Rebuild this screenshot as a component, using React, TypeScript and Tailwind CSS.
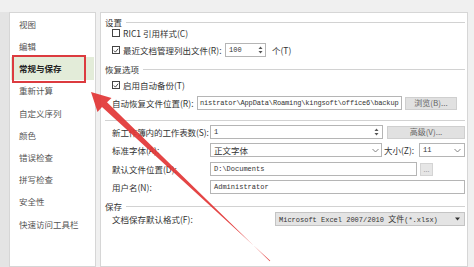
import React from "react";

const cjk = { fontFamily: '"Noto Sans CJK SC", "Noto Sans", sans-serif' };
const mono = { fontFamily: '"Liberation Mono", "Noto Sans CJK SC", monospace' };

function Check({ checked }: { checked?: boolean }) {
  return (
    <div className="w-[8px] h-[8px] border border-[#444] bg-white flex items-center justify-center shrink-0">
      {checked && (
        <svg width="7" height="7" viewBox="0 0 7 7">
          <polyline points="1,3.5 2.8,5.4 6,1.4" fill="none" stroke="#333" strokeWidth="1" />
        </svg>
      )}
    </div>
  );
}

function Spin() {
  return (
    <svg width="5" height="8" viewBox="0 0 5 8" className="shrink-0">
      <polygon points="2.5,0.5 4.5,3 0.5,3" fill="#555" />
      <polygon points="2.5,7.5 4.5,5 0.5,5" fill="#555" />
    </svg>
  );
}

function Chevron() {
  return (
    <svg width="7" height="5" viewBox="0 0 7 5" className="shrink-0">
      <polyline points="0.5,1 3.5,4 6.5,1" fill="none" stroke="#777" strokeWidth="0.9" />
    </svg>
  );
}

function Header({ text }: { text: string }) {
  return (
    <div className="flex items-center h-[10px]">
      <span className="text-[8.5px] leading-none text-[#333] whitespace-nowrap">{text}</span>
      <div className="flex-1 h-px bg-[#d2d2d2] ml-[4px]" />
    </div>
  );
}

const items = ["视图", "编辑", "常规与保存", "重新计算", "自定义序列", "颜色", "错误检查", "拼写检查", "安全性", "快速访问工具栏"];

export default function App() {
  return (
    <div className="relative w-[474px] h-[267px] bg-[#f0f0f0] overflow-hidden text-[#333] whitespace-nowrap" style={cjk}>
      <div className="h-[12px]" />
      <div className="flex h-[255px]">
        <div className="w-[10px] bg-[#e4e4e4] border-r border-[#d6d6d6]" />
        {/* left nav */}
        <div className="w-[86px] bg-white border border-[#d6d6d6] border-l-0 pt-0">
          {items.map((t) => (
            <div
              key={t}
              className={
                "h-[22.2px] flex items-center pl-[8px] mx-[1px] text-[8.5px] leading-none " +
                (t === "常规与保存" ? "bg-[#e3ecd9] font-bold text-[#222]" : "text-[#555]")
              }
            >
              {t}
            </div>
          ))}
        </div>
        <div className="w-[4px]" />
        {/* right panel */}
        <div className="w-[368px] bg-white border border-[#d6d6d6] pl-[4px] pr-[2px] text-[8.5px] leading-none">
          <div className="mt-[4px]">
            <Header text="设置" />
          </div>
          <div className="flex items-center h-[10px] mt-[1px] pl-[7px]">
            <Check />
            <span className="ml-[3px]">RIC1 引用样式(C)</span>
          </div>
          <div className="flex items-center h-[14px] mt-[5px] pl-[7px]">
            <Check checked />
            <span className="ml-[3px] w-[102px] shrink-0">最近文档管理列出文件(R):</span>
            <div className="w-[41px] h-[14px] border border-[#b5b5b5] flex items-center pl-[3px] pr-[2px]">
              <span className="flex-1 text-[7px]" style={mono}>100</span>
              <Spin />
            </div>
            <span className="ml-[6px]">个(T)</span>
          </div>
          <div className="mt-[7px]">
            <Header text="恢复选项" />
          </div>
          <div className="flex items-center h-[10px] mt-[6px] pl-[7px]">
            <Check checked />
            <span className="ml-[3px]">启用自动备份(T)</span>
          </div>
          <div className="flex items-center h-[14px] mt-[6px] pl-[7px]">
            <span className="w-[85px] shrink-0">自动恢复文件位置(R):</span>
            <div className="w-[205px] shrink-0 h-[14px] border border-[#b5b5b5] flex items-center pl-[2px] overflow-hidden">
              <span className="text-[7px] tracking-[-0.15px]" style={mono}>nistrator\AppData\Roaming\kingsoft\office6\backup</span>
            </div>
            <div className="ml-[3px] w-[52px] h-[13px] bg-[#e1e1e1] border border-[#cfcfcf] flex items-center justify-center text-[#666] text-[8px]">
              浏览(B)...
            </div>
          </div>
          <div className="h-px bg-[#d2d2d2] mt-[10px]" />
          <div className="flex items-center h-[14px] mt-[4px] pl-[7px]">
            <span className="w-[98px] shrink-0 tracking-[-0.1px]">新工作簿内的工作表数(S):</span>
            <div className="w-[173px] shrink-0 h-[14px] border border-[#b5b5b5] flex items-center pl-[3px] pr-[3px]">
              <span className="flex-1 text-[7px]" style={mono}>1</span>
              <Spin />
            </div>
            <div className="ml-[4px] flex-1 h-[13px] bg-[#e1e1e1] border border-[#cfcfcf] flex items-center justify-center text-[#666] text-[8px]">
              高级(V)...
            </div>
          </div>
          <div className="flex items-center h-[14px] mt-[4px] pl-[7px]">
            <span className="w-[98px] shrink-0">标准字体(A):</span>
            <div className="w-[172px] shrink-0 h-[14px] border border-[#b5b5b5] flex items-center pl-[3px] pr-[2px]">
              <span className="flex-1">正文字体</span>
              <Chevron />
            </div>
            <span className="ml-[2px] w-[35px] shrink-0">大小(Z):</span>
            <div className="flex-1 h-[14px] border border-[#b5b5b5] flex items-center pl-[3px] pr-[3px]">
              <span className="flex-1 text-[7px]" style={mono}>11</span>
              <Chevron />
            </div>
          </div>
          <div className="flex items-center h-[14px] mt-[5px] pl-[7px]">
            <span className="w-[98px] shrink-0">默认文件位置(D):</span>
            <div className="w-[207px] shrink-0 h-[14px] border border-[#b5b5b5] flex items-center pl-[3px]">
              <span className="text-[7px]" style={mono}>D:\Documents</span>
            </div>
            <div className="ml-[3px] w-[13px] h-[13px] bg-[#e6e6e6] border border-[#d4d4d4] flex items-center justify-center text-[#999] text-[7px]">
              ...
            </div>
          </div>
          <div className="flex items-center h-[14px] mt-[4px] pl-[7px]">
            <span className="w-[98px] shrink-0">用户名(N):</span>
            <div className="flex-1 h-[14px] border border-[#b5b5b5] flex items-center pl-[3px]">
              <span className="text-[7px]" style={mono}>Administrator</span>
            </div>
          </div>
          <div className="mt-[7px]">
            <Header text="保存" />
          </div>
          <div className="flex items-center h-[14px] mt-[1px] pl-[7px]">
            <span className="w-[163px] shrink-0">文档保存默认格式(F):</span>
            <div className="flex-1 h-[14px] bg-[#e4e4e4] border border-[#c4c4c4] flex items-center pl-[3px] pr-[4px]">
              <span className="flex-1 text-[7px]" style={mono}>Microsoft Excel 2007/2010 <span style={cjk} className="text-[8px]">文件</span>(*.xlsx)</span>
              <svg width="5" height="4" viewBox="0 0 5 4"><polygon points="0,0.5 5,0.5 2.5,3.5" fill="#333" /></svg>
            </div>
          </div>
        </div>
        <div className="flex-1" />
      </div>

      {/* red highlight box */}
      <div className="absolute left-[12px] top-[55px] w-[74px] h-[28px] border-2 border-[#dc3b3f]" />

      {/* red arrow */}
      <svg className="absolute left-0 top-0 pointer-events-none" width="474" height="267" viewBox="0 0 474 267">
        <polygon points="91,92 97.5,112 102,107 270.3,260.7 269.7,261.3 107,102.3 111.5,98" fill="#e23535" opacity="0.92" />
      </svg>
    </div>
  );
}
